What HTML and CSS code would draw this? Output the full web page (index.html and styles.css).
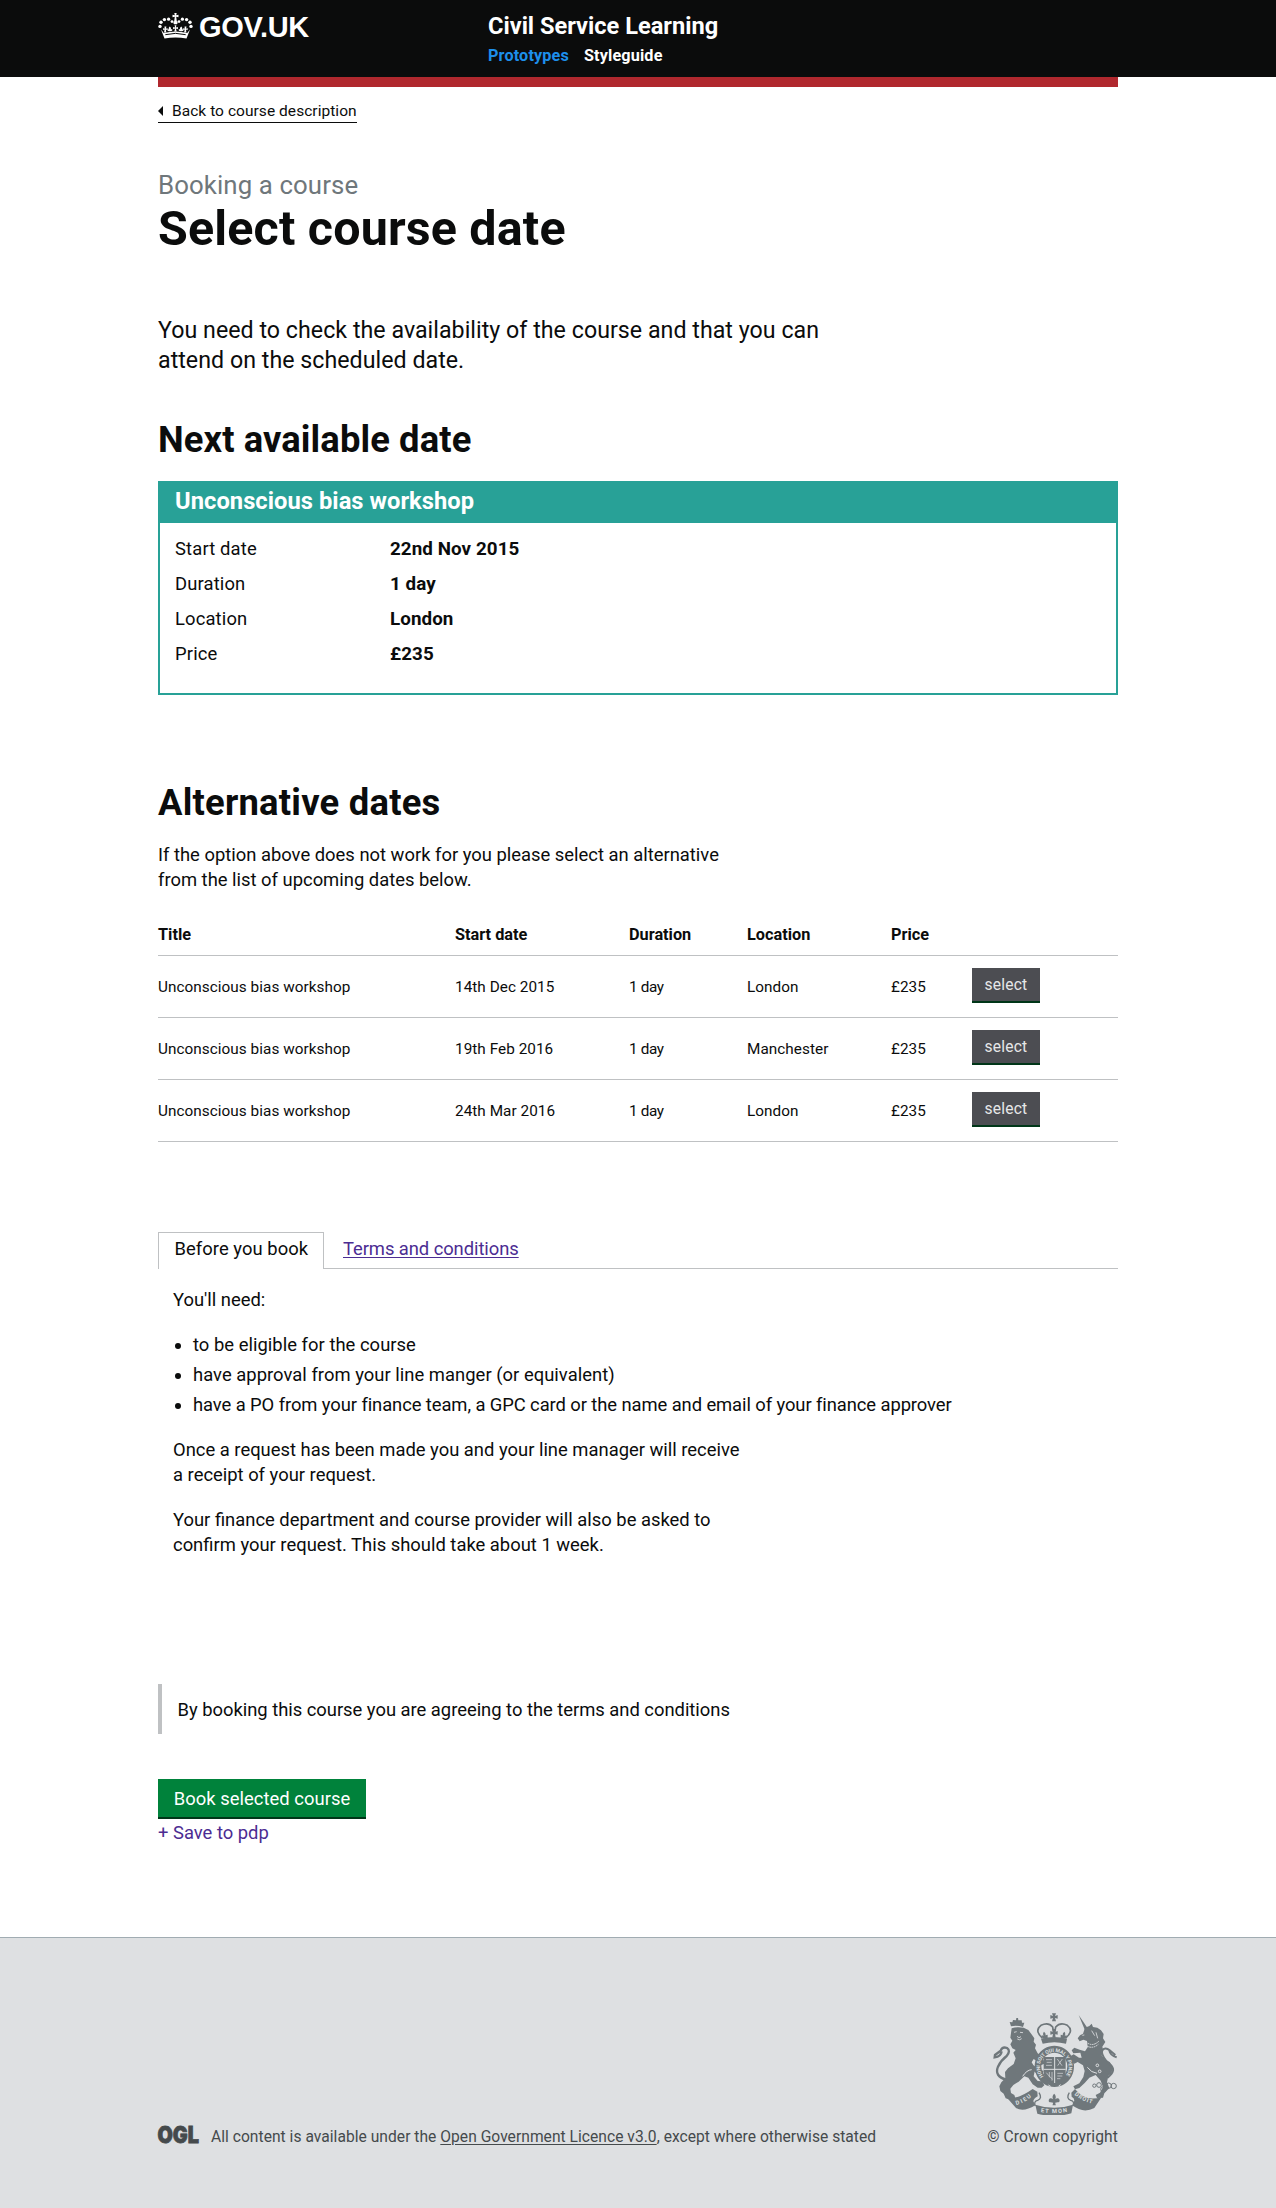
FILE: index.html
```html
<!DOCTYPE html>
<html lang="en">
<head>
<meta charset="utf-8">
<title>Select course date</title>
<link rel="stylesheet" href="styles.css">
</head>
<body>
<header class="site-header">
  <div class="container site-header__inner">
    <a class="logo" href="#">
      <svg class="logo__crown" viewBox="0 0 35 26" width="35" height="26" aria-hidden="true">
        <g fill="#fff">
          <circle cx="2" cy="13.400" r="1.700"/><circle cx="3" cy="9.300" r="1.700"/><circle cx="6.400" cy="6.600" r="1.700"/><circle cx="10.600" cy="6.200" r="1.600"/><circle cx="14" cy="8.600" r="1.400"/>
          <circle cx="33" cy="13.400" r="1.700"/><circle cx="32" cy="9.300" r="1.700"/><circle cx="28.600" cy="6.600" r="1.700"/><circle cx="24.400" cy="6.200" r="1.600"/><circle cx="21" cy="8.600" r="1.400"/>
          <path d="M16.300 0h2.400l-.5 2.200 2.300-.5v2.600l-2.300-.5.6 4.500c1 .6 1.200 2.200 0 3h-2.600c-1.200-.8-1-2.400 0-3l.6-4.500-2.300.5V1.700l2.300.5z"/>
          <path d="M3 16.500 6.500 25.500Q17.500 23.300 28.500 25.500L32 16.500 29.200 20Q17.500 16.800 5.800 20z"/>
          <path d="M6.500 13.400h1.900l-.5 2.400 1.600-.7v2.100l-1.600-.6.4 3H6l.6-3-1.400.6v-2.100l1.400.7zM26.600 13.400h1.900l-.5 2.400 1.600-.7v2.100l-1.600-.6.4 3h-2.300l.6-3-1.400.6v-2.100l1.400.7zM16.600 12.200h1.800l-.5 2.400 2-.7v2.300l-2-.6.8 3h-2.400l.8-3-2 .6v-2.300l2 .7z"/>
          <path d="M11.800 13.500c1.200.8 1.500 2 .9 3l1.500-.4v1.600l-2 .6h-1.200l-1.400-.6v-1.600l1.400.4c-.6-1-.3-2.200.8-3zM23.200 13.500c-1.200.8-1.500 2-.9 3l-1.500-.4v1.600l2 .6H24l1.400-.6v-1.600l-1.400.4c.6-1 .3-2.200-.8-3z"/>
        </g>
        <path d="M7.300 21.700Q17.500 19 27.700 21.700" fill="none" stroke="#0b0c0c" stroke-width="1"/>
      </svg>
      <span class="logo__text">GOV.UK</span>
    </a>
    <div class="proposition">
      <span class="proposition__name">Civil Service Learning</span>
      <nav class="proposition__nav">
        <a class="proposition__link proposition__link--active" href="#">Prototypes</a>
        <a class="proposition__link" href="#">Styleguide</a>
      </nav>
    </div>
  </div>
</header>

<main class="container">
  <div class="header-bar"></div>
  <a class="back-link" href="#">Back to course description</a>

  <p class="caption">Booking a course</p>
  <h1 class="title">Select course date</h1>
  <p class="lede">You need to check the availability of the course and that you can<br>attend on the scheduled date.</p>

  <h2 class="heading heading--next">Next available date</h2>
  <section class="course">
    <h3 class="course__title">Unconscious bias workshop</h3>
    <dl class="course__details">
      <dt>Start date</dt><dd>22nd Nov 2015</dd>
      <dt>Duration</dt><dd>1 day</dd>
      <dt>Location</dt><dd>London</dd>
      <dt>Price</dt><dd>£235</dd>
    </dl>
  </section>

  <h2 class="heading heading--alternative">Alternative dates</h2>
  <p class="intro">If the option above does not work for you please select an alternative<br>from the list of upcoming dates below.</p>

  <table class="dates">
    <colgroup>
      <col class="dates__col-title"><col class="dates__col-start"><col class="dates__col-duration"><col class="dates__col-location"><col class="dates__col-price"><col>
    </colgroup>
    <thead>
      <tr><th>Title</th><th>Start date</th><th>Duration</th><th>Location</th><th>Price</th><th></th></tr>
    </thead>
    <tbody>
      <tr><td>Unconscious bias workshop</td><td>14th Dec 2015</td><td class="dates__duration">1 day</td><td>London</td><td>£235</td><td class="dates__action"><button class="select-button">select</button></td></tr>
      <tr><td>Unconscious bias workshop</td><td>19th Feb 2016</td><td class="dates__duration">1 day</td><td>Manchester</td><td>£235</td><td class="dates__action"><button class="select-button">select</button></td></tr>
      <tr><td>Unconscious bias workshop</td><td>24th Mar 2016</td><td class="dates__duration">1 day</td><td>London</td><td>£235</td><td class="dates__action"><button class="select-button">select</button></td></tr>
    </tbody>
  </table>

  <nav class="tabs">
    <span class="tabs__item tabs__item--active">Before you book</span>
    <a class="tabs__item" href="#">Terms and conditions</a>
  </nav>
  <section class="panel">
    <p>You'll need:</p>
    <ul class="panel__list">
      <li>to be eligible for the course</li>
      <li>have approval from your line manger (or equivalent)</li>
      <li class="panel__wide-item">have a PO from your finance team, a GPC card or the name and email of your finance approver</li>
    </ul>
    <p>Once a request has been made you and your line manager will receive<br>a receipt of your request.</p>
    <p>Your finance department and course provider will also be asked to<br>confirm your request. This should take about 1 week.</p>
  </section>

  <p class="notice">By booking this course you are agreeing to the terms and conditions</p>
  <button class="book-button">Book selected course</button>
  <a class="save-link" href="#">+ Save to pdp</a>
</main>

<footer class="footer">
  <div class="container footer__inner">
    <div class="licence">
      <svg class="licence__logo" viewBox="0 0 41 18" width="41" height="18" role="img" aria-label="OGL">
        <text x="-0.500" y="17" textLength="41.500" lengthAdjust="spacingAndGlyphs" class="licence__logo-text">OGL</text>
      </svg>
      <p class="licence__text">All content is available under the <a href="#">Open Government Licence v3.0</a>, except where otherwise stated</p>
    </div>
    <a class="copyright" href="#">
      <svg class="crest" viewBox="24 24 375 306" width="125" height="102" aria-hidden="true">
        <defs>
          <path id="garter" d="M176 214A43 44 0 1 1 240 214"/>
          <path id="scroll-left" d="M94 300Q122 293 143 272"/>
          <path id="scroll-mid" d="M167 321Q208 328 250 320"/>
          <path id="scroll-right" d="M268 269Q292 290 326 297"/>
        </defs>
        <g fill="#6f777b">
          <!-- lion -->
          <path d="M78 64 74 51 82 52 84 45 93 46 94 39 99 39 100 46 110 46 111 53 118 53 114 66Q96 60 78 64z"/>
          <path d="M80 70Q96 64 116 68L130 75 139 87 148 100 146 110 153 119 150 130 158 145 167 152 176 165 178 176 167 181 158 170 146 162 140 172 147 184 149 199 146 214 158 228 171 229 178 241 170 248 158 248 143 238 130 218 118 214 101 230 85 240 76 251 78 264 88 270 92 282 80 286 62 280 56 266 46 258 43 244 49 232 61 220 60 201 69 190 86 177 92 160 85 143 92 135 82 130 76 118 82 107 76 98z"/>
          <path d="M132 168Q140 180 154 186L160 194 176 197 173 207 158 208 142 195z"/>
          <!-- garter and shield -->
          <path d="M208 122a59 62 0 1 0 .1 0zm0 21a39 41 0 1 1-.1 0z" fill-rule="evenodd"/>
          <path d="M176 156h66v52q-8 20-33 27-25-7-33-27z"/>
          <!-- royal crown -->
          <path d="M201 25h12l-3 8 8-3v11l-8-2 3 10h-12l3-10-8 2V30l8 3z"/>
          <path d="M168 101Q208 91 246 101L243 116Q208 107 173 116z"/>
          <path d="M202 72h11l-3 9 8-3v11l-8-2 2 10h-10l2-10-8 2V78l8 3zM177 80q7 6 4 11l7-2v10l-15 2-3-10 6 1q-4-6 1-12zM238 80q-7 6-4 11l-7-2v10l15 2 3-10-6 1q4-6-1-12z"/>
          <!-- unicorn -->
          <path d="M281 30 308 70 300 76z"/>
          <path d="M300 68 313 63 320 56 324 66 337 68 348 76 356 87 354 100 361 111 352 125 355 137 350 151 361 164 374 171 383 183 380 205 370 213 366 232 373 249 358 265 354 278 336 279 332 270 345 263 354 246 347 227 332 210 313 218 299 234 283 249 270 253 265 244 283 235 295 216 299 198 294 181 278 171 268 176 256 166 256 154 266 148 282 158 290 158 286 143 265 145 260 136 268 128 284 134 300 139 308 127 306 108 295 104 284 109 278 100 285 91 294 86z"/>
          <!-- scrolls -->
          <path d="M66 278Q94 286 143 252L157 260 158 274Q145 282 145 289L151 301Q115 323 93 309zM350 276Q300 292 270 252L259 263 260 275Q270 280 267 290L262 301Q295 327 328 309z"/>
          <path d="M151 299Q208 318 264 299L259 325Q208 340 157 326z"/>
          <path d="M207.500 266q8 8 3 17 9-7 13 1 2 8-6 8l-7 1 2 8h-10l2-8-7-1q-8 0-6-8 4-8 13-1-5-9 3-17z"/>
        </g>
        <g fill="none" stroke="#6f777b" stroke-width="5">
          <path d="M64 224Q27 214 39 185 48 166 65 153 78 137 66 129 52 124 47 137L30 150 29 157Q48 155 50 139" stroke-width="7"/>
          <path d="M368 218Q398 194 373 177 352 158 350 138 360 124 374 136L391 150M373 137Q376 152 395 157" stroke-width="6"/>
          <path d="M172 99Q147 77 168 61 190 50 203 66L207 90M242 99Q268 77 247 61 226 50 212 66L208 90"/>
          <path d="M151 303Q145 289 158 286 173 280 162 263M264 303Q270 289 257 286 242 280 253 263" stroke-width="4"/>
          <circle cx="342" cy="240" r="7" stroke-width="3"/><circle cx="355" cy="253" r="8" stroke-width="3"/><circle cx="371" cy="242" r="8" stroke-width="3"/><circle cx="386" cy="243" r="8" stroke-width="3"/><circle cx="328" cy="242" r="5" stroke-width="3"/>
        </g>
        <g fill="none" stroke="#dee0e2" stroke-width="3">
          <path d="M209 156v78M176 193h66"/>
          <path d="M183 164h18M185 172h15M183 181h18M217 162l14 20M232 162l-14 20M184 203q9 12 19 20M193 201v16M201 201v26M217 205h17M217 213h15M216 221h10" stroke-width="2"/>
          <path d="M295 115Q318 137 340 118M302 110Q322 128 342 108" stroke-dasharray="5 2"/>
          <path d="M87 82l8-2M105 82l9 1M96 94l6 4 6-3M97 102q7 5 13-1M292 91l6-1M320 77l9 15M333 82l5 18" stroke-width="2.500"/>
          <path d="M113 214Q125 195 140 194M307 187Q319 203 336 205M190 240l7 4M221 243l6-4"/>
          <circle cx="337" cy="181" r="4"/><circle cx="344" cy="199" r="4"/>
        </g>
        <g class="crest__lettering">
          <text class="crest__motto"><textPath href="#garter" textLength="196">HONI SOIT QUI MAL Y PENSE</textPath></text>
          <text><textPath href="#scroll-left" textLength="52">DIEU</textPath></text>
          <text><textPath href="#scroll-mid" textLength="80">ET MON</textPath></text>
          <text><textPath href="#scroll-right" textLength="60">DROIT</textPath></text>
        </g>
      </svg>
      <span class="copyright__text">© Crown copyright</span>
    </a>
  </div>
</footer>
</body>
</html>
```
FILE: styles.css
```css
* {
  box-sizing: border-box;
}

body {
  margin: 0;
  background: #fff;
  color: #0b0c0c;
  font: 18.4px/25px Roboto, "Liberation Sans", sans-serif;
}

p, h1, h2, h3, dl, dd, ul {
  margin: 0;
}

a {
  color: inherit;
  text-decoration: none;
}

button {
  display: block;
  border: 0;
  font-family: inherit;
}

.container {
  width: 960px;
  margin: 0 auto;
}

/* Header */
.site-header {
  height: 77px;
  background: #0b0c0c;
  color: #fff;
}

.site-header__inner {
  display: grid;
  grid-template-columns: 330px 1fr;
  align-items: start;
}

.logo {
  display: flex;
  gap: 6px;
  padding-top: 12px;
}

.logo__crown {
  margin-top: 1px;
}

.logo__text {
  font: bold 29px/30px "Liberation Sans", sans-serif;
  letter-spacing: -0.3px;
}

.proposition {
  padding-top: 11px;
}

.proposition__name {
  display: block;
  font-size: 23.6px;
  line-height: 30px;
  font-weight: bold;
}

.proposition__nav {
  display: flex;
  gap: 15px;
  padding-top: 5px;
}

.proposition__link {
  font-size: 16.2px;
  line-height: 20px;
  font-weight: bold;
  letter-spacing: 0.15px;
}

.proposition__link--active {
  color: #1d8feb;
}

.header-bar {
  height: 10px;
  background: #b0282e;
}

/* Page heading */
.back-link {
  display: flex;
  align-items: center;
  width: max-content;
  margin-top: 14px;
  padding-bottom: 1px;
  border-bottom: 1px solid #0b0c0c;
  font-size: 15.5px;
  line-height: 20px;
  letter-spacing: 0.05px;
}

.back-link::before {
  content: "";
  margin-right: 9px;
  border: 5px solid transparent;
  border-left: 0;
  border-right-color: #0b0c0c;
}

.caption {
  margin-top: 47px;
  color: #6f777b;
  font-size: 25.8px;
  line-height: 30px;
  letter-spacing: 0.1px;
}

.title {
  margin-top: 4px;
  font-size: 48.4px;
  line-height: 49px;
  letter-spacing: 0.18px;
}

.lede {
  margin-top: 62px;
  font-size: 23.2px;
  line-height: 30px;
  letter-spacing: 0.03px;
}

.heading {
  font-size: 36.4px;
  line-height: 40px;
  letter-spacing: 0.1px;
}

.heading--next {
  margin-top: 45px;
}

.heading--alternative {
  margin-top: 88px;
  letter-spacing: 0.22px;
}

/* Selected course */
.course {
  margin-top: 21px;
  border: 2px solid #28a197;
}

.course__title {
  padding: 3px 15px 7px;
  background: #28a197;
  color: #fff;
  font-size: 23.7px;
  line-height: 30px;
  letter-spacing: 0.05px;
}

.course__details {
  display: grid;
  grid-template-columns: 215px 1fr;
  grid-auto-rows: 35px;
  padding: 13px 15px 17px;
}

.course__details dt {
  letter-spacing: 0.15px;
}

.course__details dd {
  padding-top: 1px;
  font-size: 18.8px;
  font-weight: bold;
  letter-spacing: 0.08px;
}

.intro {
  margin-top: 19px;
}

/* Alternative dates */
.dates {
  width: 100%;
  margin-top: 20px;
  border-spacing: 0;
  table-layout: fixed;
  font-size: 15.3px;
  line-height: 20px;
  text-align: left;
}

.dates__col-title { width: 297px; }
.dates__col-start { width: 174px; }
.dates__col-duration { width: 118px; }
.dates__col-location { width: 144px; }
.dates__col-price { width: 81px; }

.dates th,
.dates td {
  border-bottom: 1px solid #bfc1c3;
  vertical-align: top;
}

.dates th {
  padding: 13px 0 10px;
  font-size: 16.3px;
}

.dates td {
  padding: 21px 0 20px;
  letter-spacing: 0.05px;
}

.dates .dates__duration {
  letter-spacing: -0.35px;
}

.dates .dates__action {
  padding: 12px 0 14px;
}

.select-button {
  width: 68px;
  height: 35px;
  padding: 7px 0 6px;
  border-bottom: 2px solid #003618;
  background: #4c4d52;
  color: #e6e7e8;
  font-size: 15.6px;
  line-height: 20px;
  letter-spacing: 0.2px;
}

/* Tabs */
.tabs {
  display: flex;
  gap: 4px;
  height: 37px;
  margin-top: 90px;
  border-bottom: 1px solid #bfc1c3;
}

.tabs__item {
  padding: 4px 15px 7px;
  color: #4c2c92;
  letter-spacing: -0.07px;
  text-decoration: underline;
  text-decoration-thickness: 1px;
  text-underline-offset: 2px;
}

.tabs__item--active {
  width: 166px;
  height: 37px;
  padding: 3px 0 7px 15.5px;
  border: 1px solid #bfc1c3;
  border-bottom: 0;
  background: #fff;
  color: #0b0c0c;
  letter-spacing: 0.05px;
  text-decoration: none;
}

.panel {
  padding: 18px 15px 0;
}

.panel p + p {
  margin-top: 20px;
}

.panel__list {
  margin: 20px 0 15px;
  padding-left: 20px;
  letter-spacing: 0.03px;
}

.panel__list li {
  padding-bottom: 5px;
}

.panel__list .panel__wide-item {
  letter-spacing: -0.085px;
}

/* Booking actions */
.notice {
  margin-top: 127px;
  padding: 13px 0 12px 15.500px;
  border-left: 4px solid #bfc1c3;
  letter-spacing: -0.02px;
}

.book-button {
  width: 208px;
  height: 40px;
  margin-top: 45px;
  padding: 7px 0 6px;
  border-bottom: 2px solid #003618;
  background: #00823b;
  color: #fff;
  font-size: 18.4px;
  line-height: 25px;
  letter-spacing: 0.03px;
}

.save-link {
  display: block;
  width: max-content;
  margin-top: 1px;
  color: #4c2c92;
}

/* Footer */
.footer {
  height: 271px;
  margin-top: 92px;
  padding-top: 75px;
  border-top: 1px solid #a1acb2;
  background: #dee0e2;
  color: #454a4c;
  font-size: 15.6px;
  line-height: 20px;
}

.footer__inner {
  display: flex;
  justify-content: space-between;
  align-items: flex-end;
}

.licence {
  display: flex;
  gap: 12px;
}

.licence__logo {
  margin-top: -1px;
  overflow: visible;
}

.licence__logo-text {
  fill: #454a4c;
  stroke: #454a4c;
  stroke-width: 0.8px;
  font: 900 22.5px/18px Inter, sans-serif;
}

.licence__text {
  letter-spacing: 0.03px;
}

.licence__text a {
  text-decoration: underline;
  text-decoration-thickness: 1px;
  text-underline-offset: 2px;
}

.copyright {
  display: flex;
  flex-direction: column;
  align-items: flex-end;
  gap: 12px;
  letter-spacing: 0.1px;
}

.crest {
  display: block;
}

.crest__lettering {
  fill: #dee0e2;
  font: bold 17px Roboto, sans-serif;
  letter-spacing: 0;
}

.crest__motto {
  font-size: 15px;
}
```
